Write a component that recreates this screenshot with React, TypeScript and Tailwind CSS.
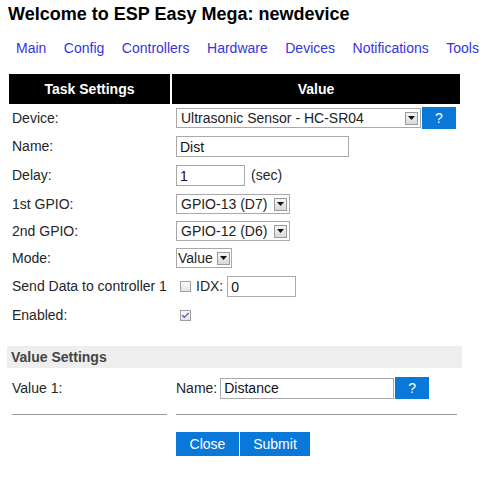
import { Check } from 'lucide-react';

function Arrow() {
  return (
    <span className="flex h-[13px] w-[13px] items-center justify-center border border-[#9a9a9a] bg-gradient-to-b from-[#f4f4f4] to-[#d9d9d9]">
      <svg width="7" height="4" viewBox="0 0 7 4">
        <path d="M0 0h7L3.5 4z" fill="#111" />
      </svg>
    </span>
  );
}

function Select({ value, width }: { value: string; width: string }) {
  return (
    <div className={`flex h-[20px] items-center justify-between border border-[#a9a9a9] bg-white pl-[4px] pr-[2px] ${width}`}>
      <span className="leading-none text-[#222]">{value}</span>
      <Arrow />
    </div>
  );
}

function Input({ value, width }: { value: string; width: string }) {
  return (
    <div className={`flex h-[21px] items-center border border-[#a9a9a9] bg-white pl-[3px] ${width}`}>
      <span className="leading-none text-[#111]">{value}</span>
    </div>
  );
}

function Box({ checked }: { checked?: boolean }) {
  return (
    <span className="flex h-[11px] w-[11px] items-center justify-center border border-[#a0a0a0] bg-gradient-to-b from-[#fafafa] to-[#e2e2e2]">
      {checked && <Check className="h-[9px] w-[9px] text-[#3f56c4]" strokeWidth={3} />}
    </span>
  );
}

function HelpButton() {
  return (
    <div className="flex h-[22px] w-[34px] items-center justify-center bg-[#0a78d8] text-[14px] text-white">?</div>
  );
}

const menu = ['Main', 'Config', 'Controllers', 'Hardware', 'Devices', 'Notifications', 'Tools'];

export default function App() {
  return (
    <div className="h-[484px] w-[500px] overflow-hidden bg-white text-[14px] text-[#262626]" style={{ fontFamily: '"Liberation Sans", Arial, sans-serif' }}>
      <h1 className="pl-[8px] pt-[3px] text-[18px] font-bold leading-[22px] text-black">Welcome to ESP Easy Mega: newdevice</h1>

      <nav className="mt-[13px] flex gap-[17.5px] pl-[16px] leading-[20px] text-[#3535dc]">
        {menu.map((m) => (
          <span key={m}>{m}</span>
        ))}
      </nav>

      {/* Task settings table */}
      <div className="ml-[9px] mt-[16px] w-[451px]">
        <div className="flex h-[30px] bg-black font-bold text-white">
          <div className="flex w-[161px] items-center justify-center">Task Settings</div>
          <div className="w-[2px] bg-white" />
          <div className="flex flex-1 items-center justify-center">Value</div>
        </div>

        <div className="flex h-[28px] items-center">
          <div className="w-[167px] pl-[3px]">Device:</div>
          <Select value="Ultrasonic Sensor - HC-SR04" width="w-[245px]" />
          <div className="ml-[1px]"><HelpButton /></div>
        </div>
        <div className="flex h-[29px] items-center">
          <div className="w-[167px] pl-[3px]">Name:</div>
          <Input value="Dist" width="w-[173px]" />
        </div>
        <div className="flex h-[29px] items-center">
          <div className="w-[167px] pl-[3px]">Delay:</div>
          <Input value="1" width="w-[69px]" />
          <span className="ml-[6px]">(sec)</span>
        </div>
        <div className="flex h-[28px] items-center">
          <div className="w-[167px] pl-[3px]">1st GPIO:</div>
          <Select value="GPIO-13 (D7)" width="w-[114px]" />
        </div>
        <div className="flex h-[26px] items-center">
          <div className="w-[167px] pl-[3px]">2nd GPIO:</div>
          <Select value="GPIO-12 (D6)" width="w-[114px]" />
        </div>
        <div className="flex h-[28px] items-center">
          <div className="w-[167px] pl-[3px]">Mode:</div>
          <div className="flex h-[20px] w-[56px] items-center justify-between border border-[#a9a9a9] bg-white pl-[1px] pr-[1px]">
            <span className="leading-none">Value</span>
            <Arrow />
          </div>
        </div>
        <div className="flex h-[29px] items-center">
          <div className="w-[167px] pl-[3px]">Send Data to controller 1</div>
          <div className="ml-[4px]"><Box /></div>
          <span className="ml-[5px] mr-[4px]">IDX:</span>
          <Input value="0" width="w-[69px]" />
        </div>
        <div className="flex h-[28px] items-center">
          <div className="w-[167px] pl-[3px]">Enabled:</div>
          <div className="ml-[4px]"><Box checked /></div>
        </div>
      </div>

      {/* Value settings */}
      <div className="ml-[7px] mt-[17px] flex h-[22px] w-[455px] items-center bg-[#eeeeee] pl-[4px] font-bold text-[#444]">
        Value Settings
      </div>
      <div className="ml-[9px] flex h-[40px] w-[451px] items-center">
        <div className="w-[167px] pl-[3px]">Value 1:</div>
        <span className="mr-[3px]">Name:</span>
        <Input value="Distance" width="w-[174px]" />
        <div className="ml-[1px]"><HelpButton /></div>
      </div>
      <div className="ml-[12px] mt-[6px] flex items-center">
        <div className="h-px w-[155px] bg-[#9a9a9a]" />
        <div className="ml-[9px] h-px w-[281px] bg-[#9a9a9a]" />
      </div>
      <div className="ml-[176px] mt-[17px] flex gap-[1px]">
        <div className="flex h-[24px] w-[63px] items-center justify-center bg-[#0a78d8] text-white">Close</div>
        <div className="flex h-[24px] w-[70px] items-center justify-center bg-[#0a78d8] text-white">Submit</div>
      </div>
    </div>
  );
}
